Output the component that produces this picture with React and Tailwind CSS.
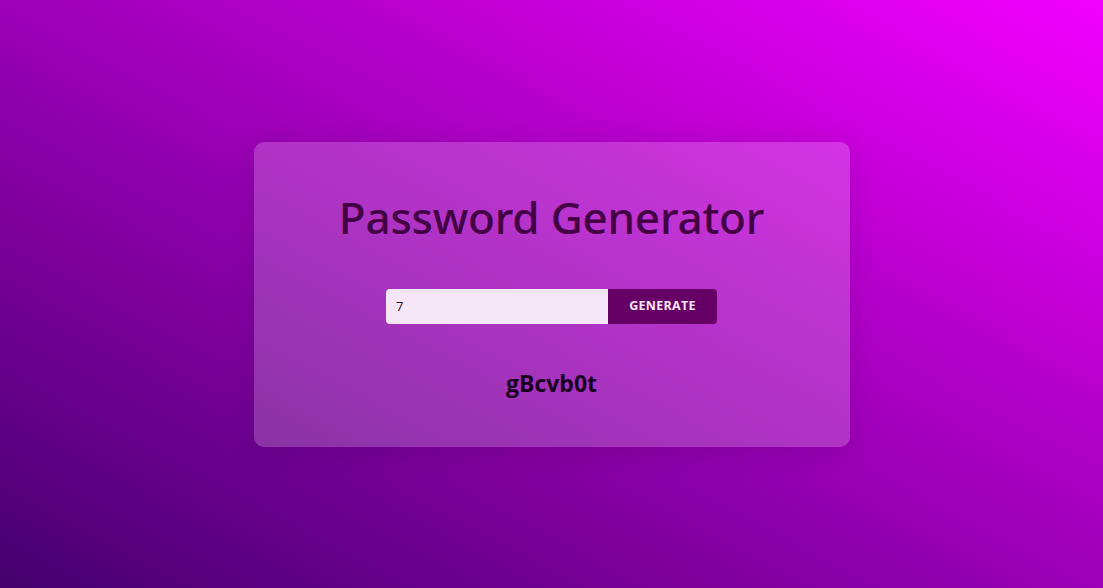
import React, { useState } from 'react';

export default function App() {
  const [length, setLength] = useState('7');
  const [password] = useState('gBcvb0t');

  return (
    <div
      className="w-full h-[588px] flex items-center justify-center bg-[linear-gradient(to_top_right,#46006f,#f200ff)]"
      style={{ fontFamily: '"Open Sans", "Noto Sans", sans-serif' }}
    >
      <div className="w-[596px] h-[305px] rounded-[10px] bg-white/20 shadow-[0_4px_30px_rgba(0,0,0,0.12)] flex flex-col items-center pt-[43px]">
        <h1 className="font-['Noto_Sans',sans-serif] text-[44px] font-medium leading-[64px] text-[#430044] tracking-[-0.2px]">
          Password Generator
        </h1>

        <div className="mt-[40px] flex h-[35px] rounded-[4px] overflow-hidden">
          <input
            type="text"
            value={length}
            onChange={(e) => setLength(e.target.value)}
            className="w-[222px] h-full bg-[#f4e6f6] text-[13px] text-[#1a0a1a] px-[10px] outline-none"
          />
          <button className="w-[109px] h-full bg-[#660066] text-[#f6e6f6] text-[12.5px] font-bold tracking-[0.3px]">
            GENERATE
          </button>
        </div>

        <div className="mt-[44px] text-[23px] font-bold text-[#1a001f] leading-[30px]">{password}</div>
      </div>
    </div>
  );
}
